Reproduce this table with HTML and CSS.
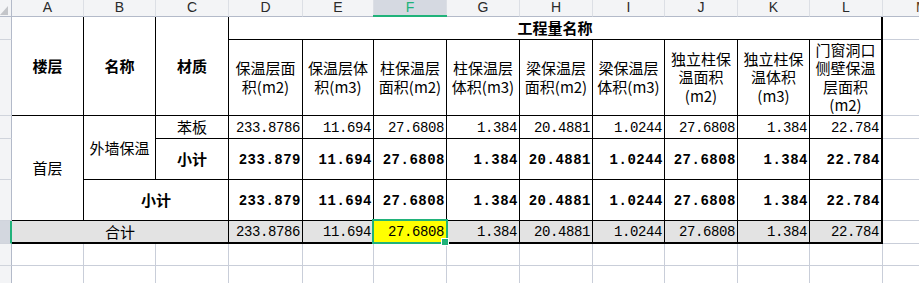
FILE: index.html
```html
<!DOCTYPE html>
<html lang="zh-CN">
<head>
<meta charset="utf-8">
<title>工程量</title>
<link rel="stylesheet" href="styles.css">
</head>
<body>
<div class="sheet">
  <!-- column header row -->
  <div class="cell hd corner"><svg class="tri" width="9" height="12" viewBox="0 0 9 12"><polygon points="0,12 8,3 8,12" fill="#c3c5c9"/></svg></div>
  <div class="cell hd">A</div>
  <div class="cell hd">B</div>
  <div class="cell hd">C</div>
  <div class="cell hd">D</div>
  <div class="cell hd">E</div>
  <div class="cell hd hsel">F</div>
  <div class="cell hd">G</div>
  <div class="cell hd">H</div>
  <div class="cell hd">I</div>
  <div class="cell hd">J</div>
  <div class="cell hd">K</div>
  <div class="cell hd">L</div>
  <div class="cell hd hdM">M</div>

  <!-- row 1 -->
  <div class="cell rh"></div>
  <div class="cell t b r2">楼层</div>
  <div class="cell t b r2">名称</div>
  <div class="cell t b r2">材质</div>
  <div class="cell t b c9 last">工程量名称</div>
  <div class="cell"></div>

  <!-- row 2 -->
  <div class="cell rh"></div>
  <div class="cell t wrap">保温层面<br>积(m2)</div>
  <div class="cell t wrap">保温层体<br>积(m3)</div>
  <div class="cell t wrap">柱保温层<br>面积(m2)</div>
  <div class="cell t wrap">柱保温层<br>体积(m3)</div>
  <div class="cell t wrap">梁保温层<br>面积(m2)</div>
  <div class="cell t wrap">梁保温层<br>体积(m3)</div>
  <div class="cell t wrap">独立柱保<br>温面积<br>(m2)</div>
  <div class="cell t wrap">独立柱保<br>温体积<br>(m3)</div>
  <div class="cell t wrap last">门窗洞口<br>侧壁保温<br>层面积<br>(m2)</div>
  <div class="cell"></div>

  <!-- row 3 -->
  <div class="cell rh"></div>
  <div class="cell t r3">首层</div>
  <div class="cell t r2">外墙保温</div>
  <div class="cell t">苯板</div>
  <div class="cell t num">233.8786</div>
  <div class="cell t num">11.694</div>
  <div class="cell t num">27.6808</div>
  <div class="cell t num">1.384</div>
  <div class="cell t num">20.4881</div>
  <div class="cell t num">1.0244</div>
  <div class="cell t num">27.6808</div>
  <div class="cell t num">1.384</div>
  <div class="cell t num last">22.784</div>
  <div class="cell"></div>

  <!-- row 4 -->
  <div class="cell rh"></div>
  <div class="cell t b">小计</div>
  <div class="cell t num b">233.879</div>
  <div class="cell t num b">11.694</div>
  <div class="cell t num b">27.6808</div>
  <div class="cell t num b">1.384</div>
  <div class="cell t num b">20.4881</div>
  <div class="cell t num b">1.0244</div>
  <div class="cell t num b">27.6808</div>
  <div class="cell t num b">1.384</div>
  <div class="cell t num b last">22.784</div>
  <div class="cell"></div>

  <!-- row 5 -->
  <div class="cell rh"></div>
  <div class="cell t b c2">小计</div>
  <div class="cell t num b">233.879</div>
  <div class="cell t num b">11.694</div>
  <div class="cell t num b">27.6808</div>
  <div class="cell t num b">1.384</div>
  <div class="cell t num b">20.4881</div>
  <div class="cell t num b">1.0244</div>
  <div class="cell t num b">27.6808</div>
  <div class="cell t num b">1.384</div>
  <div class="cell t num b last">22.784</div>
  <div class="cell"></div>

  <!-- row 6 -->
  <div class="cell rh rsel"></div>
  <div class="cell t tot c3">合计</div>
  <div class="cell t tot num">233.8786</div>
  <div class="cell t tot num">11.694</div>
  <div class="cell t tot num sel">27.6808</div>
  <div class="cell t tot num">1.384</div>
  <div class="cell t tot num">20.4881</div>
  <div class="cell t tot num">1.0244</div>
  <div class="cell t tot num">27.6808</div>
  <div class="cell t tot num">1.384</div>
  <div class="cell t tot num last">22.784</div>
  <div class="cell"></div>

  <!-- row 7 -->
  <div class="cell rh"></div>
  <div class="cell"></div><div class="cell"></div><div class="cell"></div><div class="cell"></div>
  <div class="cell"></div><div class="cell"></div><div class="cell"></div><div class="cell"></div>
  <div class="cell"></div><div class="cell"></div><div class="cell"></div><div class="cell"></div>
  <div class="cell"></div>

  <!-- row 8 -->
  <div class="cell rh"></div>
  <div class="cell"></div><div class="cell"></div><div class="cell"></div><div class="cell"></div>
  <div class="cell"></div><div class="cell"></div><div class="cell"></div><div class="cell"></div>
  <div class="cell"></div><div class="cell"></div><div class="cell"></div><div class="cell"></div>
  <div class="cell"></div>
</div>
</body>
</html>
```

FILE: styles.css
```css
* {
  box-sizing: border-box;
  margin: 0;
  padding: 0;
}

html, body {
  background: #ffffff;
}

body {
  margin: 0;
  width: 919px;
  height: 283px;
  overflow: hidden;
}

.sheet {
  display: grid;
  grid-template-columns: 12px 72px 72px 73px 74px 71px 73px 73px 73px 72px 73px 72px 73px 73px;
  grid-template-rows: 17px 23px 76px 23px 41px 41px 23px 22px 22px;
  font-family: "Noto Sans CJK SC", "Liberation Sans", sans-serif;
  font-size: 15px;
  color: #000;
}

.cell {
  display: flex;
  align-items: center;
  justify-content: center;
  text-align: center;
  white-space: nowrap;
  overflow: hidden;
  border-right: 1px solid #c9ced9;
  border-bottom: 1px solid #c9ced9;
  line-height: 18px;
}

/* column headers */
.hd {
  background: #f3f4f6;
  border-right-color: #dcdfe5;
  border-bottom-color: #b3bac9;
  font-family: "Liberation Sans", Arial, sans-serif;
  font-size: 14px;
  line-height: 15px;
  color: #2a2a2a;
  padding-bottom: 1px;
}

.corner {
  border-right-color: #b3bac9;
  align-items: flex-end;
  justify-content: flex-start;
  padding: 0;
}

.tri {
  display: block;
  margin-bottom: 1px;
}

.hsel {
  background: #d5d9e1;
  color: #20b27a;
  overflow: visible;
  position: relative;
}

.hsel::after {
  content: "";
  position: absolute;
  left: -1px;
  right: -1px;
  bottom: -1px;
  height: 2px;
  background: #20b27a;
}

.hdM {
  justify-content: flex-start;
  padding-left: 33px;
  color: #5a3a1a;
}

/* row headers */
.rh {
  background: #f3f4f6;
  border-right-color: #b3bac9;
  border-bottom-color: #d0d4dc;
}

.rsel {
  background: #d3d7df;
  border-right: 2px solid #20b27a;
}

/* table cells */
.t {
  border-right-color: #000;
  border-bottom-color: #000;
}

.last {
  border-right-width: 2px;
}

.b {
  font-weight: 700;
}

.wrap {
  white-space: normal;
  line-height: 18.5px;
}

.num {
  justify-content: flex-end;
  padding-right: 2px;
  padding-top: 1px;
  font-family: "Liberation Mono", "DejaVu Sans Mono", monospace;
  font-size: 14px;
  letter-spacing: -0.4px;
}

.num.b {
  letter-spacing: 0.5px;
  padding-right: 1px;
}

.tot {
  background: #e3e3e3;
  border-bottom-width: 2px;
}

.sel {
  background: #ffff00;
  position: relative;
  overflow: visible;
}

.sel::before {
  content: "";
  position: absolute;
  left: -2px;
  top: -2px;
  right: -2px;
  bottom: -2px;
  border: 2px solid #20b27a;
}

.sel::after {
  content: "";
  position: absolute;
  right: -3px;
  bottom: -4px;
  width: 6px;
  height: 6px;
  background: #20b27a;
  border: 1px solid #ffffff;
}

/* spans */
.r2 { grid-row: span 2; }
.r3 { grid-row: span 3; }
.c2 { grid-column: span 2; }
.c3 { grid-column: span 3; }
.c9 { grid-column: span 9; }
```
